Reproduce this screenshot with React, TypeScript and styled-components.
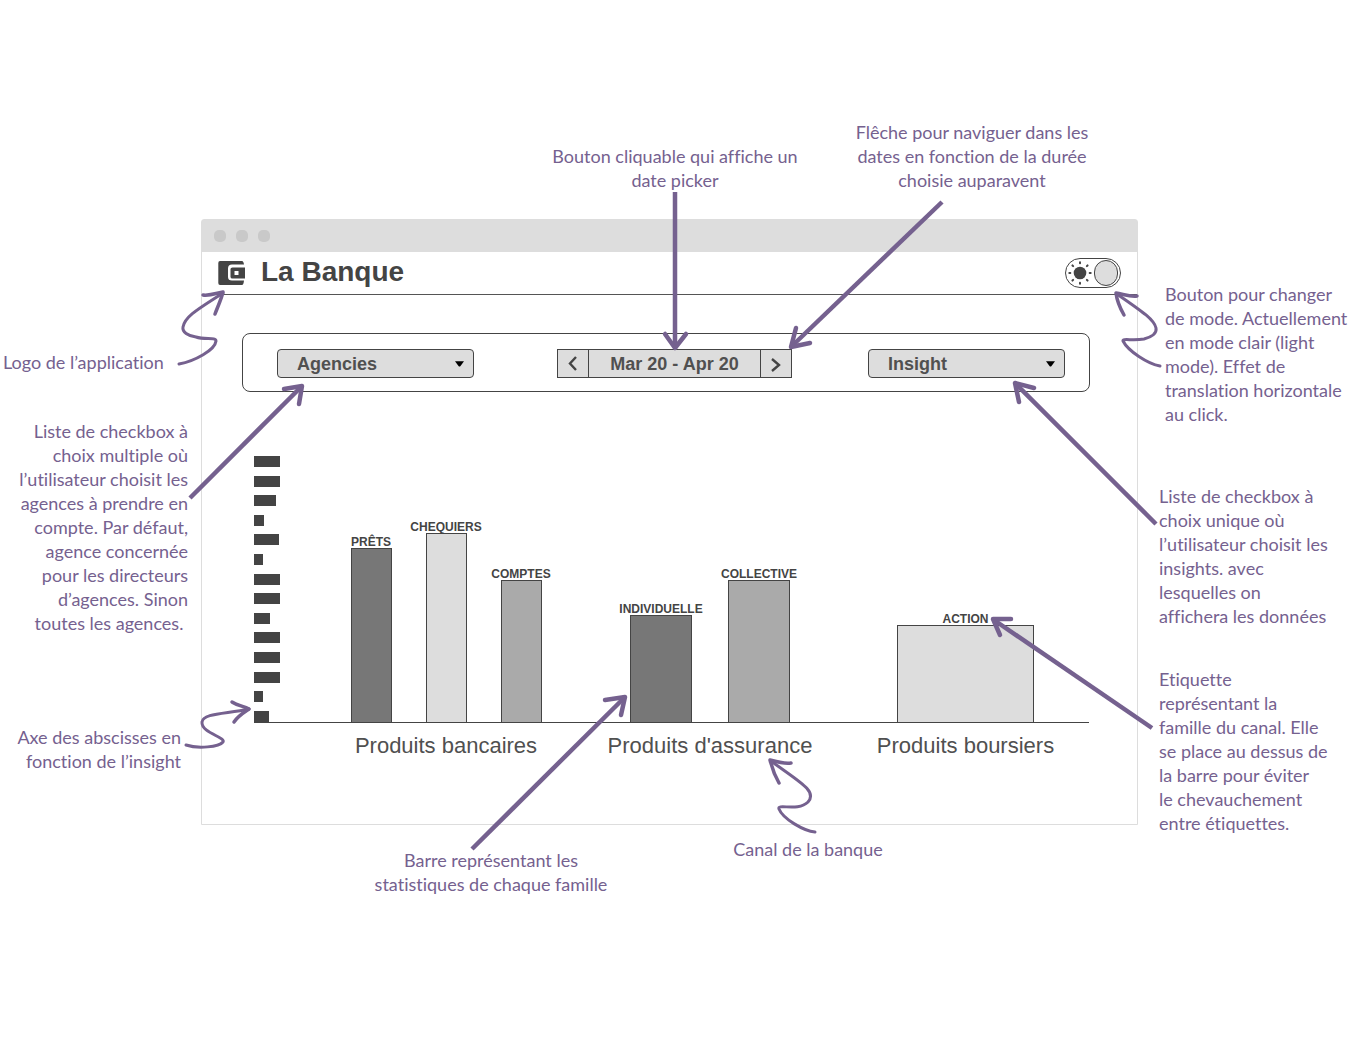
import React, { useState } from "react";
import styled, { createGlobalStyle } from "styled-components";

const ink = "#444444";
const purple = "#75618f";
const grey = "#dddddd";

const GlobalStyle = createGlobalStyle`
  *, *::before, *::after { box-sizing: border-box; }
  body {
    margin: 0;
    background: #ffffff;
    color: ${ink};
    font-family: "Liberation Sans", Arial, sans-serif;
  }
`;

const Board = styled.main`
  position: relative;
  display: grid;
  grid-template-columns: minmax(0, 201fr) minmax(0, 937fr) minmax(0, 212fr);
  min-height: 100vh;
`;

const LeftNotes = styled.aside`
  display: flex;
  flex-direction: column;
  align-items: flex-start;
  padding: 350px 0 0 3px;
`;

const RightNotes = styled.aside`
  display: flex;
  flex-direction: column;
  padding: 282px 0 0 21px;
`;

const Center = styled.div`
  display: flex;
  flex-direction: column;
`;

const TopNotes = styled.div`
  display: grid;
  grid-template-columns: 321fr 306fr 288fr 22fr;
  align-items: end;
  padding: 120px 0 27px;
`;

const BottomNotes = styled.div`
  display: grid;
  grid-template-columns: 132fr 316fr 318fr 171fr;
  align-items: start;
  padding-top: 12px;
`;

const Note = styled.p<{ $align?: string; $col?: number; $width?: number; $gap?: number; $indent?: number }>`
  margin: ${(p) => p.$gap ?? 0}px 0 0 ${(p) => p.$indent ?? 0}px;
  width: ${(p) => (p.$width ? `${p.$width}px` : "auto")};
  grid-column: ${(p) => p.$col ?? "auto"};
  color: ${purple};
  font: 400 18px/24px Lato, "Open Sans", sans-serif;
  font-variant-ligatures: none;
  text-align: ${(p) => p.$align ?? "left"};
  white-space: pre;
`;

const Window = styled.section`
  border: 1px solid ${grey};
  border-radius: 3px 3px 0 0;
  min-height: 606px;
`;

const TitleBar = styled.div`
  display: flex;
  align-items: center;
  gap: 10px;
  height: 32px;
  padding-left: 12px;
  background: ${grey};
`;

const Dot = styled.span`
  width: 12px;
  height: 12px;
  border-radius: 5px;
  background: #c9c9c9;
`;

const Header = styled.header`
  display: flex;
  align-items: center;
  height: 43px;
  padding: 0 16px;
  border-bottom: 1px solid #555555;
`;

const Title = styled.h1`
  margin: 0 auto 0 16px;
  padding-bottom: 2px;
  font-size: 28px;
  line-height: 32px;
  font-weight: 700;
`;

const Toggle = styled.label`
  display: flex;
  align-items: center;
  justify-content: space-between;
  width: 56px;
  height: 30px;
  padding: 0 2px;
  border: 1px solid ${ink};
  border-radius: 15px;
  cursor: pointer;
`;

const ToggleInput = styled.input`
  appearance: none;
  order: 2;
  width: 24px;
  height: 26px;
  margin: 0;
  border: 1px solid ${ink};
  border-radius: 12px;
  background: ${grey};
  transition: transform 0.2s;
  &:not(:checked) { transform: translateX(-26px); }
`;

const Filters = styled.form`
  display: grid;
  grid-template-columns: 197fr 83fr 235fr 76fr 197fr;
  align-items: center;
  height: 59px;
  margin: 38px 47px 0 40px;
  padding: 2px 24px 0 34px;
  border: 1px solid ${ink};
  border-radius: 8px;
`;

const SelectBox = styled.label<{ $col: number }>`
  display: grid;
  grid-column: ${(p) => p.$col};
  align-items: center;
  & > * { grid-area: 1 / 1; }
  & > svg { justify-self: end; margin-right: 10px; pointer-events: none; }
`;

const Select = styled.select`
  appearance: none;
  width: 100%;
  height: 29px;
  padding: 0 19px;
  border: 1px solid ${ink};
  border-radius: 4px;
  background: ${grey};
  color: #505050;
  font: 700 18px/24px "Liberation Sans", Arial, sans-serif;
`;

const DateGroup = styled.div`
  display: grid;
  grid-column: 3;
  grid-template-columns: 30px 1fr 31px;
  height: 29px;
  border: 1px solid ${ink};
  background: ${grey};
`;

const DateButton = styled.button`
  display: flex;
  align-items: center;
  justify-content: center;
  padding: 0;
  border: 0;
  background: transparent;
  color: #505050;
  font: 700 18px/24px "Liberation Sans", Arial, sans-serif;
  & + & { border-left: 1px solid ${ink}; }
`;

const Chart = styled.div`
  margin: 64px 48px 0 52px;
`;

const Plot = styled.div`
  display: grid;
  grid-template-columns: 66fr 252fr 276fr 235fr 6fr;
  height: 267px;
  border-bottom: 1px solid ${ink};
`;

const Axis = styled.div`
  display: flex;
  flex-direction: column;
  justify-content: space-between;
`;

const Tick = styled.span`
  height: 11px;
  background: ${ink};
`;

const Group = styled.div<{ $gap: number }>`
  display: flex;
  justify-content: center;
  align-items: flex-end;
  gap: ${(p) => p.$gap}px;
`;

const BarColumn = styled.div<{ $width: number }>`
  display: flex;
  flex-direction: column;
  align-items: center;
  width: ${(p) => p.$width}px;
`;

const BarLabel = styled.span`
  font-size: 12px;
  line-height: 12px;
  font-weight: 700;
  white-space: nowrap;
`;

const Bar = styled.div<{ $tone: string }>`
  width: 100%;
  border: 1px solid ${ink};
  border-bottom: 0;
  background: ${(p) => p.$tone};
`;

const Categories = styled.div`
  display: grid;
  grid-template-columns: 66fr 252fr 276fr 235fr 6fr;
  padding-top: 11px;
`;

const Category = styled.span<{ $col: number }>`
  grid-column: ${(p) => p.$col};
  font-size: 22px;
  line-height: 24px;
  text-align: center;
  color: #505050;
`;

const Arrows = styled.svg`
  position: absolute;
  top: 0;
  left: 0;
  width: 100%;
  height: 1050px;
  pointer-events: none;
  fill: none;
  stroke: ${purple};
`;

const ticks = [26, 26, 22, 10, 25, 9, 26, 26, 16, 26, 26, 26, 9, 15];

const groups = [
  {
    name: "Produits bancaires",
    gap: 34,
    width: 41,
    bars: [
      { name: "PRÊTS", value: 174, tone: "#777777" },
      { name: "CHEQUIERS", value: 189, tone: "#dddddd" },
      { name: "COMPTES", value: 142, tone: "#aaaaaa" },
    ],
  },
  {
    name: "Produits d'assurance",
    gap: 36,
    width: 62,
    bars: [
      { name: "INDIVIDUELLE", value: 107, tone: "#777777" },
      { name: "COLLECTIVE", value: 142, tone: "#aaaaaa" },
    ],
  },
  {
    name: "Produits boursiers",
    gap: 0,
    width: 137,
    bars: [{ name: "ACTION", value: 97, tone: "#dddddd" }],
  },
];

const straightArrows = [
  { line: "M675 192V347", head: "M665 334L675 348L686 334" },
  { line: "M942 202L792 346", head: "M796 328L791 347L810 343" },
  { line: "M190 498L301 387", head: "M284 389L302 386L299 404" },
  { line: "M1156 524L1016 384", head: "M1034 388L1015 383L1019 402" },
  { line: "M1152 728L994 620", head: "M1011 619L993 619L1000 635" },
  { line: "M472 849L624 698", head: "M605 700L625 697L621 715" },
];

const curlyArrows = [
  {
    line: "M179 364C195 361 215 350 216 341C216 337 205 340 196 337C188 336 182 332 183 327C185 316 200 308 223 293",
    head: "M203 295C210 296 217 293 223 292C221 300 218 306 215 314",
  },
  {
    line: "M1160 366C1148 364 1128 351 1123 341C1122 338 1133 341 1144 339C1152 337 1157 333 1156 328C1154 319 1140 310 1117 294",
    head: "M1137 296C1130 297 1123 294 1116 293C1117 301 1120 308 1124 315",
  },
  {
    line: "M186 745C198 749 219 747 223 742C226 737 201 733 202 722C203 713 226 714 249 709",
    head: "M232 702C238 706 244 706 249 709C243 713 238 716 234 722",
  },
  {
    line: "M815 832C804 831 783 819 779 809C777 803 798 812 808 802C818 791 798 781 771 761",
    head: "M791 763C784 764 777 762 770 760C772 768 775 776 779 783",
  },
];

const Caret = () => (
  <svg width="9" height="6" viewBox="0 0 9 6" aria-hidden="true">
    <path d="M0 0.3H9L5.500 5Q4.500 6 3.500 5Z" fill="#000000" />
  </svg>
);

const WalletLogo = () => (
  <svg width="27" height="24" viewBox="0 0 27 24" aria-hidden="true">
    <path
      fill={ink}
      d="M2 0H24Q25.5 0 26 3.5H14Q10 3.5 10 7.500V16Q10 19.500 14 19.500H26Q25.500 24 24 24H2Q0.300 24 0.300 22V2Q0.300 0 2 0Z"
    />
    <path fill={ink} fillRule="evenodd" d="M14.500 6.500H27V17.500H14.500Q12.500 17.500 12.500 16V8Q12.500 6.500 14.500 6.500ZM16.500 10V14H20.500V10Z" />
  </svg>
);

const Sun = () => (
  <svg width="24" height="24" viewBox="0 0 24 24" fill={ink} aria-hidden="true">
    <circle cx="12" cy="12" r="6.300" />
    {[0, 45, 90, 135, 180, 225, 270, 315].map((angle) => (
      <rect key={angle} x="11" y="0.300" width="2" height="3" rx="1" transform={`rotate(${angle} 12 12)`} />
    ))}
  </svg>
);

const Chevron = ({ right = false }: { right?: boolean }) => (
  <svg width="12" height="16" viewBox="0 0 12 16" fill="none" stroke={ink} strokeWidth="2.400" aria-hidden="true">
    <path d={right ? "M2 3L9 9L2 15" : "M9 1L3 7.500L9 14"} />
  </svg>
);

export default function App() {
  const [light, setLight] = useState(true);

  return (
    <>
      <GlobalStyle />
      <Board>
        <LeftNotes>
          <Note>Logo de l’application</Note>
          <Note $align="right" $gap={45} $width={185}>
            {"Liste de checkbox à\nchoix multiple où\nl’utilisateur choisit les\nagences à prendre en\ncompte. Par défaut,\nagence concernée\npour les directeurs\nd’agences. Sinon\ntoutes les agences. "}
          </Note>
          <Note $align="right" $gap={90} $width={178}>
            {"Axe des abscisses en\nfonction de l’insight"}
          </Note>
        </LeftNotes>

        <Center>
          <TopNotes>
            <Note $align="center" $col={2}>{"Bouton cliquable qui affiche un\ndate picker"}</Note>
            <Note $align="center" $col={3}>
              {"Flêche pour naviguer dans les\ndates en fonction de la durée\nchoisie auparavent"}
            </Note>
          </TopNotes>

          <Window>
            <TitleBar>
              <Dot />
              <Dot />
              <Dot />
            </TitleBar>
            <Header>
              <WalletLogo />
              <Title>La Banque</Title>
              <Toggle>
                <ToggleInput
                  type="checkbox"
                  role="switch"
                  aria-label="Mode clair"
                  checked={light}
                  onChange={() => setLight(!light)}
                />
                <Sun />
              </Toggle>
            </Header>

            <Filters>
              <SelectBox $col={1}>
                <Select aria-label="Agencies">
                  <option>Agencies</option>
                </Select>
                <Caret />
              </SelectBox>
              <DateGroup>
                <DateButton type="button" aria-label="Période précédente">
                  <Chevron />
                </DateButton>
                <DateButton type="button">Mar 20 - Apr 20</DateButton>
                <DateButton type="button" aria-label="Période suivante">
                  <Chevron right />
                </DateButton>
              </DateGroup>
              <SelectBox $col={5}>
                <Select aria-label="Insight">
                  <option>Insight</option>
                </Select>
                <Caret />
              </SelectBox>
            </Filters>

            <Chart>
              <Plot>
                <Axis>
                  {ticks.map((width, i) => (
                    <Tick key={i} style={{ width }} />
                  ))}
                </Axis>
                {groups.map((group) => (
                  <Group key={group.name} $gap={group.gap}>
                    {group.bars.map((bar) => (
                      <BarColumn key={bar.name} $width={group.width}>
                        <BarLabel>{bar.name}</BarLabel>
                        <Bar $tone={bar.tone} style={{ height: bar.value }} />
                      </BarColumn>
                    ))}
                  </Group>
                ))}
              </Plot>
              <Categories>
                {groups.map((group, i) => (
                  <Category key={group.name} $col={i + 2}>{group.name}</Category>
                ))}
              </Categories>
            </Chart>
          </Window>

          <BottomNotes>
            <Note $align="center" $col={2} $gap={11}>
              {"Barre représentant les\nstatistiques de chaque famille"}
            </Note>
            <Note $align="center" $col={3}>Canal de la banque</Note>
          </BottomNotes>
        </Center>

        <RightNotes>
          <Note $indent={6}>
            {"Bouton pour changer\nde mode. Actuellement\nen mode clair (light\nmode). Effet de\ntranslation horizontale\nau click."}
          </Note>
          <Note $gap={58}>
            {"Liste de checkbox à\nchoix unique où\nl’utilisateur choisit les\ninsights. avec\nlesquelles on\naffichera les données"}
          </Note>
          <Note $gap={39}>
            {"Etiquette\nreprésentant la\nfamille du canal. Elle\nse place au dessus de\nla barre pour éviter\nle chevauchement\nentre étiquettes."}
          </Note>
        </RightNotes>

        <Arrows viewBox="0 0 1350 1050" preserveAspectRatio="none" aria-hidden="true">
          {straightArrows.map((arrow) => (
            <g key={arrow.line}>
              <path d={arrow.line} strokeWidth="4.500" />
              <path d={arrow.head} strokeWidth="4.500" strokeLinecap="round" strokeLinejoin="round" />
            </g>
          ))}
          {curlyArrows.map((arrow) => (
            <g key={arrow.line} strokeWidth="3" strokeLinecap="round" strokeLinejoin="round">
              <path d={arrow.line} />
              <path d={arrow.head} strokeWidth="3.500" />
            </g>
          ))}
        </Arrows>
      </Board>
    </>
  );
}
